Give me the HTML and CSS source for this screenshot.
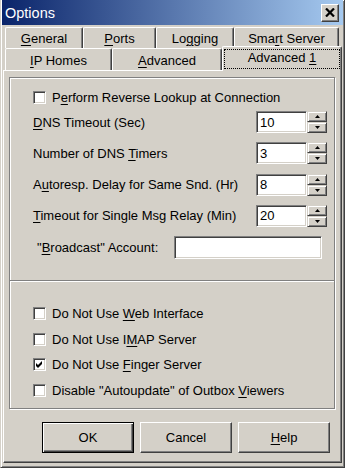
FILE: index.html
```html
<!DOCTYPE html>
<html lang="en">
<head>
    <meta charset="UTF-8">
    <title>Options</title>
    <link rel="stylesheet" href="styles.css">
</head>
<body>
    <div class="window">
        <div class="titlebar">
            <span class="title">Options</span>
            <span class="close-btn">
                <svg width="10" height="9" viewBox="0 0 10 9"><path d="M1 0.5 L9 8.5 M9 0.5 L1 8.5" stroke="#000" stroke-width="2.2" fill="none"/></svg>
            </span>
        </div>

        <div class="tabs">
            <div class="tab-row">
                <div class="tab w-general"><span><u>G</u>eneral</span></div>
                <div class="tab w-ports"><span><u>P</u>orts</span></div>
                <div class="tab w-logging"><span>Lo<u>g</u>ging</span></div>
                <div class="tab w-smart"><span>Sma<u>r</u>t Server</span></div>
            </div>
            <div class="tab-row row-front">
                <div class="tab w-iphomes"><span><u>I</u>P Homes</span></div>
                <div class="tab w-advanced"><span><u>A</u>dvanced</span></div>
                <div class="tab tab-active"><span class="focus"><span>Advanced <u>1</u></span></span></div>
            </div>
        </div>

        <div class="panel">
            <div class="group group-top">
                <label class="check-row">
                    <span class="checkbox"></span>
                    <span>P<u>e</u>rform Reverse Lookup at Connection</span>
                </label>
                <div class="spin-list">
                    <div class="spin-row">
                        <span class="label"><u>D</u>NS Timeout (Sec)</span>
                        <span class="field">10</span>
                        <span class="spinner">
                            <span class="spin-btn"><svg width="5" height="3"><polygon points="0,3 5,3 2.5,0" fill="#000"/></svg></span>
                            <span class="spin-btn"><svg width="5" height="3"><polygon points="0,0 5,0 2.5,3" fill="#000"/></svg></span>
                        </span>
                    </div>
                    <div class="spin-row">
                        <span class="label">Number of DNS <u>T</u>imers</span>
                        <span class="field">3</span>
                        <span class="spinner">
                            <span class="spin-btn"><svg width="5" height="3"><polygon points="0,3 5,3 2.5,0" fill="#000"/></svg></span>
                            <span class="spin-btn"><svg width="5" height="3"><polygon points="0,0 5,0 2.5,3" fill="#000"/></svg></span>
                        </span>
                    </div>
                    <div class="spin-row">
                        <span class="label">A<u>u</u>toresp. Delay for Same Snd. (Hr)</span>
                        <span class="field">8</span>
                        <span class="spinner">
                            <span class="spin-btn"><svg width="5" height="3"><polygon points="0,3 5,3 2.5,0" fill="#000"/></svg></span>
                            <span class="spin-btn"><svg width="5" height="3"><polygon points="0,0 5,0 2.5,3" fill="#000"/></svg></span>
                        </span>
                    </div>
                    <div class="spin-row">
                        <span class="label"><u>T</u>imeout for Single Msg Relay (Min)</span>
                        <span class="field">20</span>
                        <span class="spinner">
                            <span class="spin-btn"><svg width="5" height="3"><polygon points="0,3 5,3 2.5,0" fill="#000"/></svg></span>
                            <span class="spin-btn"><svg width="5" height="3"><polygon points="0,0 5,0 2.5,3" fill="#000"/></svg></span>
                        </span>
                    </div>
                    <div class="spin-row broadcast-row">
                        <span class="broadcast-label">"<u>B</u>roadcast" Account:</span>
                        <span class="field field-wide"></span>
                    </div>
                </div>
            </div>

            <div class="group group-bottom">
                <label class="check-row">
                    <span class="checkbox"></span>
                    <span>Do Not Use <u>W</u>eb Interface</span>
                </label>
                <label class="check-row">
                    <span class="checkbox"></span>
                    <span>Do Not Use I<u>M</u>AP Server</span>
                </label>
                <label class="check-row">
                    <span class="checkbox">
                        <svg width="9" height="9" viewBox="0 0 9 9"><polygon points="1,3 3,5 7,1 7,4 3,8 1,6" fill="#000"/></svg>
                    </span>
                    <span>Do Not Use <u>F</u>inger Server</span>
                </label>
                <label class="check-row">
                    <span class="checkbox"></span>
                    <span>Disable "Autoupdate" of Outbox <u>V</u>iewers</span>
                </label>
            </div>

            <div class="buttons">
                <button class="btn btn-default">OK</button>
                <button class="btn">Cancel</button>
                <button class="btn"><u>H</u>elp</button>
            </div>
        </div>
    </div>
</body>
</html>
```

FILE: styles.css
```css
:root {
    --face: #d4d0c8;
    --shadow: #808080;
    --dark: #404040;
    --light: #ffffff;
}
* {
    box-sizing: border-box;
}
body {
    margin: 0;
    font-family: "Liberation Sans", Arial, sans-serif;
    font-size: 13px;
    color: #000;
    background: var(--face);
}
u {
    text-decoration-thickness: 1px;
    text-underline-offset: 2px;
}
.window {
    width: 345px;
    height: 468px;
    display: flex;
    flex-direction: column;
    background: var(--face);
    border: 1px solid;
    border-color: var(--face) var(--dark) var(--dark) var(--face);
    box-shadow: inset 1px 1px 0 var(--light), inset -1px -1px 0 var(--shadow);
    padding: 0 1px 1px 1px;
    border-top: 0;
}
.titlebar {
    height: 25px;
    display: flex;
    align-items: center;
    justify-content: space-between;
    padding: 0 4px 0 3px;
    background: linear-gradient(to right, #0a246a, #a6caf0);
}
.title {
    color: #fff;
    font-size: 14.5px;
}
.close-btn {
    width: 18px;
    height: 18px;
    display: flex;
    align-items: center;
    justify-content: center;
    background: var(--face);
    border: 1px solid;
    border-color: var(--light) var(--dark) var(--dark) var(--light);
    box-shadow: inset -1px -1px 0 var(--shadow);
}

/* tabs */
.tabs {
    padding-left: 3px;
    margin-top: 2px;
}
.tab-row {
    display: flex;
    height: 21px;
}
.row-front {
    height: 22px;
}
.tab {
    height: 100%;
    display: flex;
    align-items: center;
    justify-content: center;
    padding-top: 1px;
    white-space: nowrap;
    background: var(--face);
    border-top: 1px solid var(--light);
    border-left: 1px solid var(--light);
    border-right: 1px solid var(--dark);
    border-radius: 2px 2px 0 0;
    box-shadow: inset -1px 0 0 var(--shadow);
}
.w-general { width: 78px; }
.w-ports { width: 73px; }
.w-logging { width: 78px; }
.w-smart { width: 105px; }
.w-iphomes { width: 107px; }
.w-advanced { width: 110px; }
.tab-active {
    position: relative;
    z-index: 1;
    width: 120px;
    height: 25px;
    margin-top: -2px;
    padding: 2px 1px 2px 1px;
    align-items: stretch;
}
.focus {
    flex: 1;
    display: flex;
    align-items: center;
    justify-content: center;
    outline: 1px dotted #000;
    outline-offset: -1px;
    padding-bottom: 3px;
}

/* panel */
.panel {
    flex: 1;
    margin: 0 1px 3px 1px;
    padding: 6px 6px 0 5px;
    border: 1px solid;
    border-color: var(--light) var(--dark) var(--dark) var(--light);
    box-shadow: inset -1px -1px 0 var(--shadow);
    display: flex;
    flex-direction: column;
}
.group {
    border: 1px solid var(--shadow);
    box-shadow: inset 1px 1px 0 var(--light), 1px 1px 0 var(--light);
}
.group-top {
    height: 204px;
    padding: 13px 7px 0 23px;
}
.group-bottom {
    height: 129px;
    margin-top: -1px;
    padding: 26px 7px 0 23px;
    display: flex;
    flex-direction: column;
    gap: 12.7px;
}
.check-row {
    display: flex;
    align-items: center;
    gap: 6px;
    height: 13px;
    white-space: nowrap;
}
.checkbox {
    width: 13px;
    height: 13px;
    flex: none;
    display: flex;
    align-items: center;
    justify-content: center;
    background: #fff;
    border: 1px solid;
    border-color: var(--shadow) var(--light) var(--light) var(--shadow);
    box-shadow: inset 1px 1px 0 var(--dark), inset -1px -1px 0 var(--face);
}
.spin-list {
    margin-top: 7px;
    display: flex;
    flex-direction: column;
    gap: 9.25px;
}
.spin-row {
    display: flex;
    align-items: center;
    height: 22px;
}
.label {
    flex: 1;
    white-space: nowrap;
}
.field {
    width: 51px;
    height: 22px;
    display: flex;
    align-items: center;
    padding: 0 3px;
    background: #fff;
    border: 1px solid;
    border-color: var(--shadow) var(--light) var(--light) var(--shadow);
    box-shadow: inset 1px 1px 0 var(--dark), inset -1px -1px 0 var(--face);
}
.spinner {
    width: 20px;
    height: 22px;
    display: flex;
    flex-direction: column;
}
.spin-btn {
    flex: 1;
    display: flex;
    align-items: center;
    justify-content: center;
    background: var(--face);
    border: 1px solid;
    border-color: var(--face) var(--dark) var(--dark) var(--face);
    box-shadow: inset 1px 1px 0 var(--light), inset -1px -1px 0 var(--shadow);
}
.broadcast-row {
    height: 23px;
    padding-left: 4px;
}
.broadcast-label {
    width: 137px;
    white-space: nowrap;
}
.field-wide {
    width: 148px;
    height: 23px;
}

/* buttons */
.buttons {
    display: flex;
    gap: 6px;
    margin-top: 13px;
    padding-left: 33px;
}
.btn {
    width: 92px;
    height: 31px;
    font-family: inherit;
    font-size: 13px;
    color: #000;
    background: var(--face);
    border: 1px solid;
    border-color: var(--light) var(--dark) var(--dark) var(--light);
    box-shadow: inset -1px -1px 0 var(--shadow);
    padding: 0;
}
.btn-default {
    border: 1px solid #000;
    box-shadow: inset 1px 1px 0 var(--light), inset -1px -1px 0 var(--dark), inset -2px -2px 0 var(--shadow);
}
```
